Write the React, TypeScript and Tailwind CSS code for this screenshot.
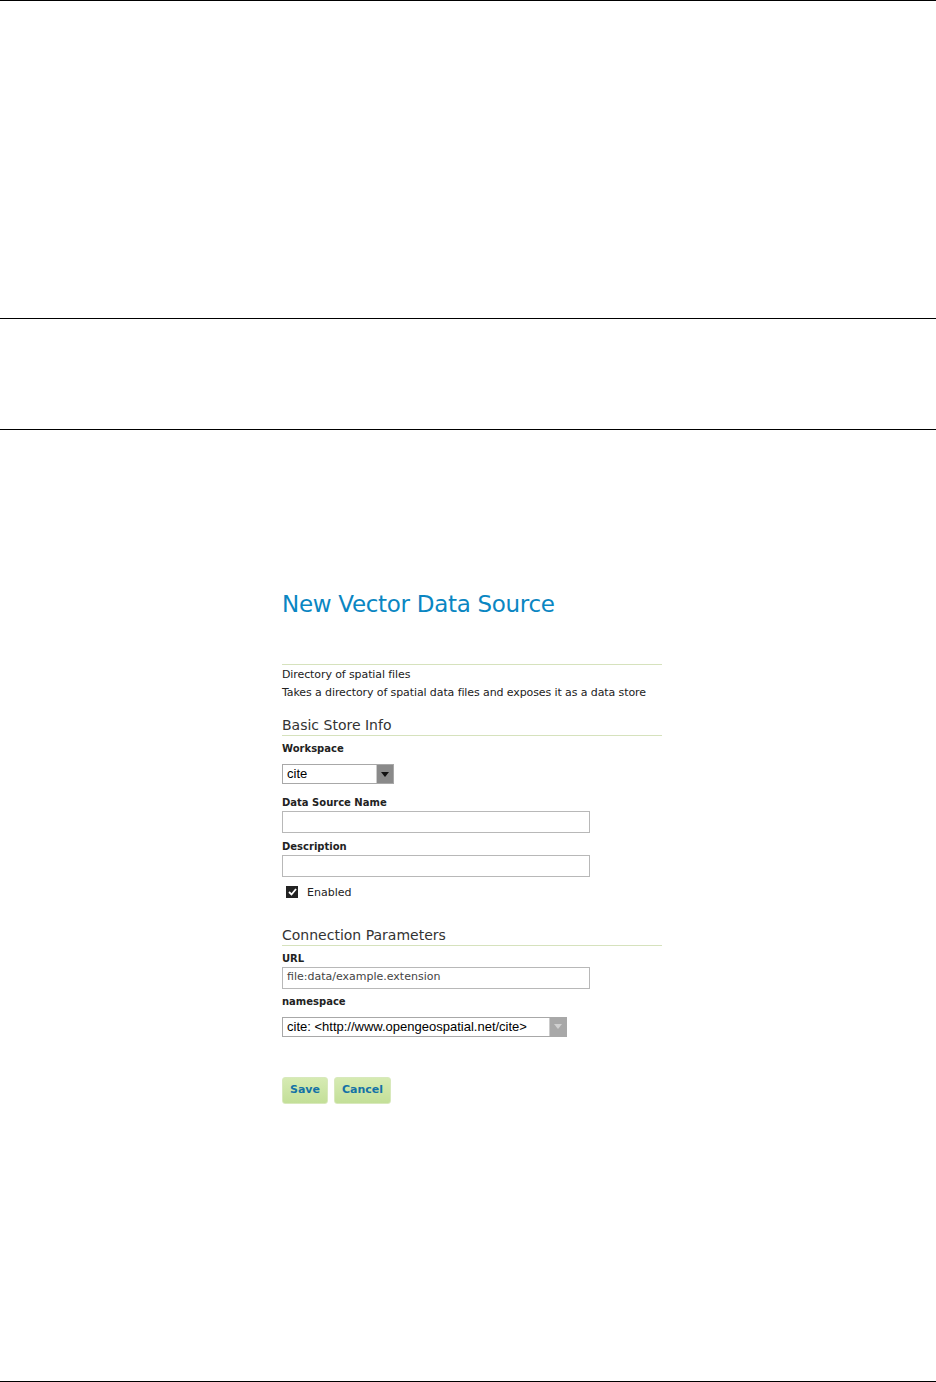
import { useState } from 'react';

function Field({ label, value = '', muted = false }: { label: string; value?: string; muted?: boolean }) {
  return (
    <div className="flex flex-col">
      <label className="text-[10px] font-bold text-[#222] leading-[14px] mb-[1px]">{label}</label>
      <div className="w-[308px] h-[22px] border border-[#b8b8b8] bg-white px-[4px] flex items-center">
        <span className={muted ? 'text-[11px] text-[#444]' : 'text-[11px]'}>{value}</span>
      </div>
    </div>
  );
}

function Select({ value, width, disabled = false }: { value: string; width: string; disabled?: boolean }) {
  return (
    <div className={`${width} h-[20px] border border-[#a8a8a8] bg-white flex items-stretch`}>
      <span className="flex-1 px-[4px] text-[13px] leading-[18px] text-black font-['Liberation_Sans',sans-serif] whitespace-nowrap">
        {value}
      </span>
      <span
        className={
          disabled
            ? 'w-[17px] bg-[#a8a8a8] border-l border-[#ccc] flex items-center justify-center'
            : 'w-[17px] bg-[#8a8a8a] border-l border-[#ccc] flex items-center justify-center'
        }
      >
        <svg width="8" height="5" viewBox="0 0 8 5">
          <path d="M0 0h8L4 5z" fill={disabled ? '#d0d0d0' : '#111'} />
        </svg>
      </span>
    </div>
  );
}

function SectionTitle({ children }: { children: string }) {
  return (
    <div className="border-b border-[#d6e2bd] pb-[1px] mb-[6px]">
      <h2 className="text-[14px] leading-[18px] text-[#333]">{children}</h2>
    </div>
  );
}

export default function App() {
  const [enabled, setEnabled] = useState(true);

  return (
    <div className="w-[936px] h-[1382px] bg-white flex flex-col font-['DejaVu_Sans',sans-serif] text-[#222]">
      <div className="h-[318px] border-t border-black" />
      <div className="h-[111px] border-t border-black" />
      <div className="flex-1 border-t border-b border-black pl-[282px] pt-[160px]">
        <h1 className="text-[23px] leading-[28px] text-[#0a86c2] tracking-[-0.3px]">New Vector Data Source</h1>

        <div className="w-[380px] mt-[46px] border-t border-[#d6e2bd] pt-[1px] text-[11px] leading-[18px] tracking-[-0.1px] text-[#222] whitespace-nowrap">
          <p>Directory of spatial files</p>
          <p>Takes a directory of spatial data files and exposes it as a data store</p>
        </div>

        <div className="w-[380px] mt-[14px]">
          <SectionTitle>Basic Store Info</SectionTitle>
          <label className="block text-[10px] font-bold leading-[14px] mb-[8px]">Workspace</label>
          <Select value="cite" width="w-[112px]" />

          <div className="mt-[12px] flex flex-col gap-[7px]">
            <Field label="Data Source Name" />
            <Field label="Description" />
          </div>

          <label className="mt-[5px] ml-[4px] flex items-center gap-[9px] text-[11px]">
            <button
              onClick={() => setEnabled(!enabled)}
              className="w-[12px] h-[12px] bg-[#222] flex items-center justify-center"
            >
              {enabled && (
                <svg width="9" height="8" viewBox="0 0 9 8">
                  <path d="M1 4l2.5 2.5L8 1" stroke="white" strokeWidth="1.8" fill="none" />
                </svg>
              )}
            </button>
            <span className="mt-[3px]">Enabled</span>
          </label>
        </div>

        <div className="w-[380px] mt-[24px]">
          <SectionTitle>Connection Parameters</SectionTitle>
          <Field label="URL" value="file:data/example.extension" muted />
          <label className="block mt-[6px] text-[10px] font-bold leading-[14px] mb-[8px]">namespace</label>
          <Select value="cite: <http://www.opengeospatial.net/cite>" width="w-[285px]" disabled />
        </div>

        <div className="mt-[40px] flex gap-[6px]">
          <button className="h-[27px] px-[7px] rounded-[3px] border border-[#d8e9bc] bg-gradient-to-b from-[#d6ebb3] to-[#c3df98] text-[#1572a6] text-[11px] font-bold">
            Save
          </button>
          <button className="h-[27px] px-[7px] rounded-[3px] border border-[#d8e9bc] bg-gradient-to-b from-[#d6ebb3] to-[#c3df98] text-[#1572a6] text-[11px] font-bold">
            Cancel
          </button>
        </div>
      </div>
    </div>
  );
}
